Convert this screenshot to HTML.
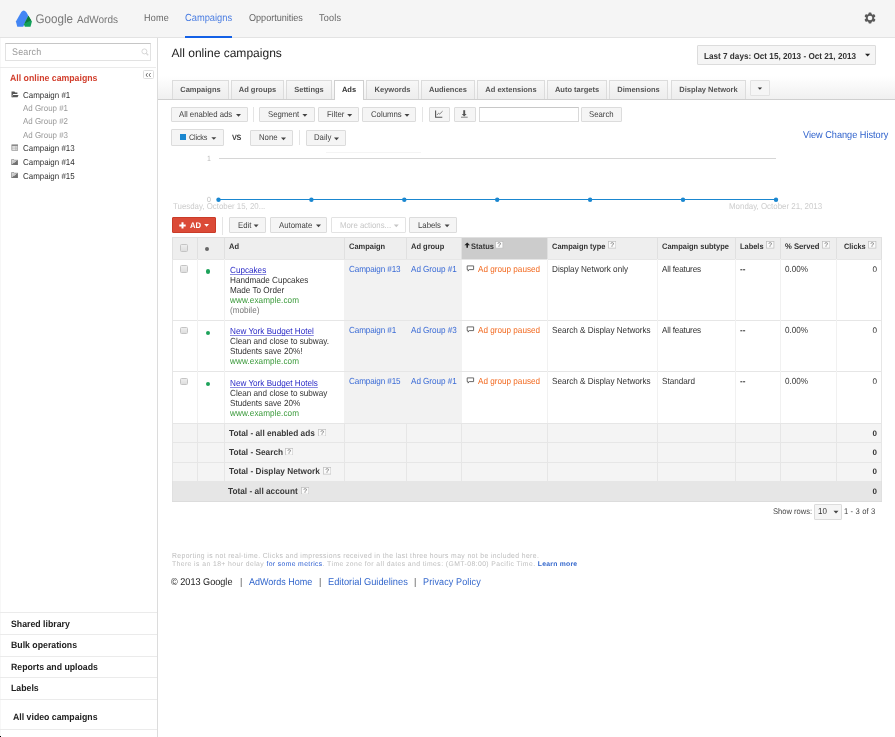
<!DOCTYPE html>
<html><head><meta charset="utf-8">
<style>
*{margin:0;padding:0;box-sizing:border-box}
html,body{width:895px;height:737px;overflow:hidden;background:#fff}
body{position:relative;font-family:"Liberation Sans",sans-serif;color:#333;text-rendering:geometricPrecision}
.a{position:absolute;white-space:nowrap}
</style></head><body><div id="w" style="position:absolute;left:0;top:0;width:895px;height:737px;background:#fff;will-change:transform;overflow:hidden">
<div class="a" style="left:0px;top:0px;width:895px;height:37px;background:#f5f5f5;"></div>
<div class="a" style="left:0px;top:37px;width:895px;height:1px;background:#e3e3e3;"></div>
<svg class="a" style="left:12px;top:8px" width="28" height="22" viewBox="0 0 28 22">
  <path d="M9.3 3.9 Q11.7 0.9 14.2 3.9 L16.4 7.8 L11.2 18.8 H5.3 L3.9 13.6 Z" fill="#4285f4"/>
  <path d="M16.4 7.8 L19.9 13.5 L18.5 18.8 H12.9 L11.9 16.4 Z" fill="#12a05a"/>
  <path d="M16.4 7.8 L19.1 12.3 L12.6 15.6 Z" fill="#0d7a3a"/>
</svg>
<svg class="a" style="left:35px;top:8px" width="90" height="22">
  <text x="0.5" y="15.2" font-family="Liberation Sans" font-size="12.6" fill="#777" textLength="37.5" lengthAdjust="spacingAndGlyphs">Google</text>
  <text x="42" y="15.2" font-family="Liberation Sans" font-size="10.6" fill="#777" textLength="41" lengthAdjust="spacingAndGlyphs">AdWords</text>
</svg>
<div class="a" style="left:144.10px;top:13px;font-size:9.933px;line-height:12px;color:#666;letter-spacing:0.275px;transform:scaleX(0.9091);transform-origin:0 0;">Home</div>
<div class="a" style="left:184.90px;top:13px;font-size:10.263px;line-height:12px;color:#4a7de2;transform:scaleX(0.9091);transform-origin:0 0;">Campaigns</div>
<div class="a" style="left:185px;top:36px;width:47px;height:2px;background:#1360e6;"></div>
<div class="a" style="left:248.60px;top:13px;font-size:9.988px;line-height:12px;color:#666;transform:scaleX(0.9091);transform-origin:0 0;">Opportunities</div>
<div class="a" style="left:319.40px;top:13px;font-size:10.010px;line-height:12px;color:#666;letter-spacing:0.220px;transform:scaleX(0.9091);transform-origin:0 0;">Tools</div>
<svg class="a" style="left:863px;top:11.4px" width="14" height="14" viewBox="-7 -7 14 14">
  <g fill="#5a5a5a"><circle r="4.2"/>
    <g id="tooth"><rect x="-1.5" y="-5.6" width="3" height="2.4" rx="0.8"/></g>
    <use href="#tooth" transform="rotate(60)"/><use href="#tooth" transform="rotate(120)"/>
    <use href="#tooth" transform="rotate(180)"/><use href="#tooth" transform="rotate(240)"/><use href="#tooth" transform="rotate(300)"/>
  </g><circle r="2.3" fill="#f5f5f5"/></svg>
<div class="a" style="left:157px;top:38px;width:1px;height:699px;background:#dcdcdc;"></div>
<div class="a" style="left:0px;top:38px;width:1px;height:699px;background:#f7f7f7;"></div>
<div class="a" style="left:5px;top:43px;width:146px;height:18px;border:1px solid #e2e2e2;border-top-color:#c6c6c6;background:#fff"></div>
<div class="a" style="left:12.30px;top:47px;font-size:9.644px;line-height:12px;color:#999;letter-spacing:0.216px;transform:scaleX(0.9259);transform-origin:0 0;">Search</div>
<svg class="a" style="left:141px;top:48px" width="9" height="9" viewBox="0 0 9 9"><circle cx="3.4" cy="3.4" r="2.5" fill="none" stroke="#d8d8d8" stroke-width="1"/><path d="M5.2 5.2 L7.2 7.2" stroke="#d8d8d8" stroke-width="1.3"/></svg>
<div class="a" style="left:0px;top:67px;width:156px;height:1px;background:#ebebeb;"></div>
<div class="a" style="left:143.4px;top:70.4px;width:10.2px;height:9px;border:1px solid #dedede;border-radius:1.5px;background:#fff"></div>
<svg class="a" style="left:145px;top:72px" width="8" height="6" viewBox="0 0 8 6"><path d="M2.6 1 L1 3 L2.6 5 M5.6 1 L4 3 L5.6 5" fill="none" stroke="#666" stroke-width="0.9"/></svg>
<div class="a" style="left:10.40px;top:72px;font-size:9.286px;line-height:12px;color:#d23f2d;font-weight:700;transform:scaleX(0.9434);transform-origin:0 0;">All online campaigns</div>
<div class="a" style="left:23.30px;top:89px;font-size:8.586px;line-height:12px;color:#333;transform:scaleX(0.9259);transform-origin:0 0;">Campaign #1</div>
<div class="a" style="left:23.30px;top:102px;font-size:8.586px;line-height:12px;color:#999;transform:scaleX(0.9259);transform-origin:0 0;">Ad Group #1</div>
<div class="a" style="left:23.30px;top:115px;font-size:8.586px;line-height:12px;color:#999;transform:scaleX(0.9259);transform-origin:0 0;">Ad Group #2</div>
<div class="a" style="left:23.30px;top:129px;font-size:8.586px;line-height:12px;color:#999;transform:scaleX(0.9259);transform-origin:0 0;">Ad Group #3</div>
<div class="a" style="left:23.30px;top:142px;font-size:8.586px;line-height:12px;color:#333;transform:scaleX(0.9259);transform-origin:0 0;">Campaign #13</div>
<div class="a" style="left:23.30px;top:156px;font-size:8.586px;line-height:12px;color:#333;transform:scaleX(0.9259);transform-origin:0 0;">Campaign #14</div>
<div class="a" style="left:23.30px;top:170px;font-size:8.586px;line-height:12px;color:#333;transform:scaleX(0.9259);transform-origin:0 0;">Campaign #15</div>
<svg class="a" style="left:10.5px;top:90.8px" width="8" height="7" viewBox="0 0 8 7"><path d="M0.5 0.5 H3.4 L4.3 1.6 H6.4 V3.1 H2.2 L1.5 4.2 V6.3 H0.5 Z" fill="#555"/><path d="M2 3.9 H7.5 L6.6 6.3 H1 Z" fill="#555"/></svg>
<svg class="a" style="left:10.5px;top:144px" width="7.5" height="7" viewBox="0 0 8 7.5"><rect x="0.9" y="0.9" width="6.4" height="5.8" fill="#eee" stroke="#8a8a8a" stroke-width="0.8"/><rect x="0.9" y="0.9" width="6.4" height="1.4" fill="#8a8a8a"/><path d="M0.9 4.4 H7.3 M5.2 2.4 V6.7" stroke="#999" stroke-width="0.6"/></svg>
<svg class="a" style="left:10.6px;top:158.5px" width="7.4" height="6.5" viewBox="0 0 8 7"><defs><linearGradient id="fg158" x1="0" y1="0" x2="1" y2="1"><stop offset="0" stop-color="#e4e4e4"/><stop offset="0.5" stop-color="#c4c4c4"/><stop offset="0.52" stop-color="#777"/><stop offset="1" stop-color="#666"/></linearGradient></defs><path d="M0.5 0.6 H3.2 L3.8 1.3 H7.5 V6.5 H0.5 Z" fill="url(#fg158)" stroke="#808080" stroke-width="0.7"/></svg>
<svg class="a" style="left:10.6px;top:171.6px" width="7.4" height="6.5" viewBox="0 0 8 7"><defs><linearGradient id="fg171" x1="0" y1="0" x2="1" y2="1"><stop offset="0" stop-color="#e4e4e4"/><stop offset="0.5" stop-color="#c4c4c4"/><stop offset="0.52" stop-color="#777"/><stop offset="1" stop-color="#666"/></linearGradient></defs><path d="M0.5 0.6 H3.2 L3.8 1.3 H7.5 V6.5 H0.5 Z" fill="url(#fg171)" stroke="#808080" stroke-width="0.7"/></svg>
<div class="a" style="left:0px;top:612.0px;width:157px;height:1.0px;background:#ebebeb;"></div>
<div class="a" style="left:0px;top:633.9px;width:157px;height:1.0px;background:#ebebeb;"></div>
<div class="a" style="left:0px;top:655.6px;width:157px;height:1.0px;background:#ebebeb;"></div>
<div class="a" style="left:0px;top:677.0px;width:157px;height:1.0px;background:#ebebeb;"></div>
<div class="a" style="left:0px;top:698.9px;width:157px;height:1.0px;background:#ebebeb;"></div>
<div class="a" style="left:0px;top:728.6px;width:157px;height:1.0px;background:#ebebeb;"></div>
<div class="a" style="left:10.60px;top:618px;font-size:9.275px;line-height:12px;color:#222;font-weight:700;transform:scaleX(0.9434);transform-origin:0 0;">Shared library</div>
<div class="a" style="left:10.80px;top:639px;font-size:9.275px;line-height:12px;color:#222;font-weight:700;transform:scaleX(0.9434);transform-origin:0 0;">Bulk operations</div>
<div class="a" style="left:10.80px;top:661px;font-size:9.275px;line-height:12px;color:#222;font-weight:700;transform:scaleX(0.9434);transform-origin:0 0;">Reports and uploads</div>
<div class="a" style="left:10.80px;top:682px;font-size:9.275px;line-height:12px;color:#222;font-weight:700;transform:scaleX(0.9434);transform-origin:0 0;">Labels</div>
<div class="a" style="left:13.00px;top:711px;font-size:9.275px;line-height:12px;color:#222;font-weight:700;transform:scaleX(0.9434);transform-origin:0 0;">All video campaigns</div>
<div class="a" style="left:171.50px;top:47px;font-size:12.040px;line-height:12px;color:#222;">All online campaigns</div>
<div class="a" style="left:697px;top:45px;width:179px;height:19.6px;background:#f5f5f5;border:1px solid #dcdcdc;border-radius:1px;"></div>
<div class="a" style="left:703.50px;top:50px;font-size:8.671px;line-height:12px;color:#333;font-weight:700;transform:scaleX(0.9434);transform-origin:0 0;">Last 7 days: Oct 15, 2013 - Oct 21, 2013</div>
<svg class="a" style="left:865px;top:53px" width="8" height="5"><path d="M0.00 0.80 H5.20 L2.60 3.40 Z" fill="#222"/></svg>
<div class="a" style="left:158px;top:76px;width:737px;height:23px;background:;background:linear-gradient(#fff,#f0f0f0)"></div>
<div class="a" style="left:158px;top:98.6px;width:737px;height:1.0px;background:#cfcfcf;"></div>
<div class="a" style="left:172px;top:79.9px;width:57.00px;height:18.70px;background:linear-gradient(#f7f7f7,#ededed);border:1px solid #dcdcdc;border-bottom:none;font-size:7.5px;font-weight:bold;color:#444;text-align:center;line-height:18.70px"></div>
<div class="a" style="left:172px;top:84.40px;width:57.00px;text-align:center;font-size:7.5px;line-height:12px;font-weight:bold;color:#555">Campaigns</div>
<div class="a" style="left:231px;top:79.9px;width:53.00px;height:18.70px;background:linear-gradient(#f7f7f7,#ededed);border:1px solid #dcdcdc;border-bottom:none;font-size:7.5px;font-weight:bold;color:#444;text-align:center;line-height:18.70px"></div>
<div class="a" style="left:231px;top:84.40px;width:53.00px;text-align:center;font-size:7.5px;line-height:12px;font-weight:bold;color:#555">Ad groups</div>
<div class="a" style="left:286px;top:79.9px;width:46.00px;height:18.70px;background:linear-gradient(#f7f7f7,#ededed);border:1px solid #dcdcdc;border-bottom:none;font-size:7.5px;font-weight:bold;color:#444;text-align:center;line-height:18.70px"></div>
<div class="a" style="left:286px;top:84.40px;width:46.00px;text-align:center;font-size:7.5px;line-height:12px;font-weight:bold;color:#555">Settings</div>
<div class="a" style="left:334px;top:79.9px;width:30.00px;height:19.70px;background:#fff;border:1px solid #cfcfcf;border-bottom:none;font-size:7.5px;font-weight:bold;color:#222;text-align:center;line-height:19.70px"></div>
<div class="a" style="left:334px;top:84.40px;width:30.00px;text-align:center;font-size:7.5px;line-height:12px;font-weight:bold;color:#333">Ads</div>
<div class="a" style="left:366px;top:79.9px;width:53.00px;height:18.70px;background:linear-gradient(#f7f7f7,#ededed);border:1px solid #dcdcdc;border-bottom:none;font-size:7.5px;font-weight:bold;color:#444;text-align:center;line-height:18.70px"></div>
<div class="a" style="left:366px;top:84.40px;width:53.00px;text-align:center;font-size:7.5px;line-height:12px;font-weight:bold;color:#555">Keywords</div>
<div class="a" style="left:421px;top:79.9px;width:54.00px;height:18.70px;background:linear-gradient(#f7f7f7,#ededed);border:1px solid #dcdcdc;border-bottom:none;font-size:7.5px;font-weight:bold;color:#444;text-align:center;line-height:18.70px"></div>
<div class="a" style="left:421px;top:84.40px;width:54.00px;text-align:center;font-size:7.5px;line-height:12px;font-weight:bold;color:#555">Audiences</div>
<div class="a" style="left:477px;top:79.9px;width:68.00px;height:18.70px;background:linear-gradient(#f7f7f7,#ededed);border:1px solid #dcdcdc;border-bottom:none;font-size:7.5px;font-weight:bold;color:#444;text-align:center;line-height:18.70px"></div>
<div class="a" style="left:477px;top:84.40px;width:68.00px;text-align:center;font-size:7.5px;line-height:12px;font-weight:bold;color:#555">Ad extensions</div>
<div class="a" style="left:547px;top:79.9px;width:60.00px;height:18.70px;background:linear-gradient(#f7f7f7,#ededed);border:1px solid #dcdcdc;border-bottom:none;font-size:7.5px;font-weight:bold;color:#444;text-align:center;line-height:18.70px"></div>
<div class="a" style="left:547px;top:84.40px;width:60.00px;text-align:center;font-size:7.5px;line-height:12px;font-weight:bold;color:#555">Auto targets</div>
<div class="a" style="left:609px;top:79.9px;width:59.00px;height:18.70px;background:linear-gradient(#f7f7f7,#ededed);border:1px solid #dcdcdc;border-bottom:none;font-size:7.5px;font-weight:bold;color:#444;text-align:center;line-height:18.70px"></div>
<div class="a" style="left:609px;top:84.40px;width:59.00px;text-align:center;font-size:7.5px;line-height:12px;font-weight:bold;color:#555">Dimensions</div>
<div class="a" style="left:671px;top:79.9px;width:75.00px;height:18.70px;background:linear-gradient(#f7f7f7,#ededed);border:1px solid #dcdcdc;border-bottom:none;font-size:7.5px;font-weight:bold;color:#444;text-align:center;line-height:18.70px"></div>
<div class="a" style="left:671px;top:84.40px;width:75.00px;text-align:center;font-size:7.5px;line-height:12px;font-weight:bold;color:#555">Display Network</div>
<div class="a" style="left:749.6px;top:80px;width:20.0px;height:15.6px;background:#f5f5f5;border:1px solid #e2e2e2;border-radius:1px;"></div>
<svg class="a" style="left:757px;top:87px" width="7" height="5"><path d="M0.70 0.60 H5.10 L2.90 2.80 Z" fill="#333"/></svg>
<div class="a" style="left:171px;top:107px;width:77px;height:14.5px;background:#f5f5f5;border:1px solid #dcdcdc;border-radius:1px;"></div>
<div class="a" style="left:179.10px;top:108px;font-size:8.424px;line-height:12px;color:#444;transform:scaleX(0.9259);transform-origin:0 0;">All enabled ads</div>
<svg class="a" style="left:236px;top:114px" width="8" height="5"><path d="M0.00 0.05 H5.00 L2.50 2.65 Z" fill="#444"/></svg>
<div class="a" style="left:253px;top:107px;width:1px;height:15px;background:#e5e5e5;"></div>
<div class="a" style="left:259px;top:107px;width:56px;height:14.5px;background:#f5f5f5;border:1px solid #dcdcdc;border-radius:1px;"></div>
<div class="a" style="left:268.00px;top:108px;font-size:8.424px;line-height:12px;color:#444;transform:scaleX(0.9259);transform-origin:0 0;">Segment</div>
<svg class="a" style="left:302px;top:114px" width="8" height="5"><path d="M0.40 0.05 H5.40 L2.90 2.65 Z" fill="#444"/></svg>
<div class="a" style="left:318px;top:107px;width:41px;height:14.5px;background:#f5f5f5;border:1px solid #dcdcdc;border-radius:1px;"></div>
<div class="a" style="left:326.50px;top:108px;font-size:8.424px;line-height:12px;color:#444;transform:scaleX(0.9259);transform-origin:0 0;">Filter</div>
<svg class="a" style="left:347px;top:114px" width="8" height="5"><path d="M0.20 0.05 H5.20 L2.70 2.65 Z" fill="#444"/></svg>
<div class="a" style="left:362px;top:107px;width:54px;height:14.5px;background:#f5f5f5;border:1px solid #dcdcdc;border-radius:1px;"></div>
<div class="a" style="left:370.50px;top:108px;font-size:8.424px;line-height:12px;color:#444;transform:scaleX(0.9259);transform-origin:0 0;">Columns</div>
<svg class="a" style="left:404px;top:114px" width="8" height="5"><path d="M0.50 0.05 H5.50 L3.00 2.65 Z" fill="#444"/></svg>
<div class="a" style="left:422px;top:107px;width:1px;height:15px;background:#e5e5e5;"></div>
<div class="a" style="left:429px;top:107px;width:21px;height:14.5px;background:#f5f5f5;border:1px solid #dcdcdc;border-radius:1px;"></div>
<svg class="a" style="left:434px;top:109px" width="11" height="10" viewBox="0 0 11 10"><path d="M1.6 1.4 V8.3 H8.3" fill="none" stroke="#555" stroke-width="1.1"/><path d="M2.9 6 L4.6 4.2 L5.7 5 L8.6 2.2" fill="none" stroke="#666" stroke-width="0.8"/></svg>
<div class="a" style="left:454px;top:107px;width:22px;height:14.5px;background:#f5f5f5;border:1px solid #dcdcdc;border-radius:1px;"></div>
<svg class="a" style="left:459px;top:109px" width="11" height="10" viewBox="0 0 11 10"><path d="M5.2 1.2 V5.5" stroke="#555" stroke-width="1.9"/><path d="M2.8 5 L5.2 7.6 L7.6 5 Z" fill="#555"/><path d="M2 8.2 H8.7" stroke="#777" stroke-width="0.9"/></svg>
<div class="a" style="left:479.3px;top:106.8px;width:99.4px;height:15.5px;border:1px solid #d9d9d9;border-top-color:#c8c8c8;background:#fff"></div>
<div class="a" style="left:581px;top:107px;width:41px;height:15px;background:#f5f5f5;border:1px solid #dcdcdc;border-radius:1px;"></div>
<div class="a" style="left:589.40px;top:108px;font-size:8.424px;line-height:12px;color:#444;transform:scaleX(0.9259);transform-origin:0 0;">Search</div>
<div class="a" style="left:171px;top:129px;width:53px;height:16.5px;background:#f5f5f5;border:1px solid #dcdcdc;border-radius:1px;"></div>
<div class="a" style="left:179.7px;top:133.8px;width:6.4px;height:6.0px;background:#1a87d0;"></div>
<div class="a" style="left:188.80px;top:132px;font-size:7.938px;line-height:12px;color:#444;letter-spacing:-0.238px;transform:scaleX(0.9259);transform-origin:0 0;">Clicks</div>
<svg class="a" style="left:211px;top:137px" width="8" height="5"><path d="M0.30 0.20 H5.30 L2.80 2.80 Z" fill="#444"/></svg>
<div class="a" style="left:232.40px;top:132px;font-size:7.738px;line-height:12px;color:#444;font-weight:700;letter-spacing:-0.318px;transform:scaleX(0.9434);transform-origin:0 0;">VS</div>
<div class="a" style="left:250px;top:130px;width:43px;height:15.5px;background:#f5f5f5;border:1px solid #dcdcdc;border-radius:1px;"></div>
<div class="a" style="left:258.50px;top:131px;font-size:8.424px;line-height:12px;color:#444;transform:scaleX(0.9259);transform-origin:0 0;">None</div>
<svg class="a" style="left:281px;top:137px" width="8" height="5"><path d="M0.00 0.55 H5.00 L2.50 3.15 Z" fill="#444"/></svg>
<div class="a" style="left:299px;top:130px;width:1px;height:15.3px;background:#e5e5e5;"></div>
<div class="a" style="left:306px;top:130px;width:40px;height:15.5px;background:#f5f5f5;border:1px solid #dcdcdc;border-radius:1px;"></div>
<div class="a" style="left:314.20px;top:131px;font-size:8.424px;line-height:12px;color:#444;transform:scaleX(0.9259);transform-origin:0 0;">Daily</div>
<svg class="a" style="left:334px;top:137px" width="8" height="5"><path d="M0.00 0.55 H5.00 L2.50 3.15 Z" fill="#444"/></svg>
<div class="a" style="left:802.80px;top:130px;font-size:9.904px;line-height:12px;color:#2f62cc;transform:scaleX(0.9259);transform-origin:0 0;">View Change History</div>
<div class="a" style="left:326px;top:151.5px;width:95px;height:1.0px;background:#f4f4f4;"></div>
<div class="a" style="left:207.20px;top:153px;font-size:7.560px;line-height:12px;color:#bbb;transform:scaleX(0.9259);transform-origin:0 0;">1</div>
<div class="a" style="left:218.5px;top:158px;width:557.5px;height:1px;background:#d6d6d6;"></div>
<div class="a" style="left:207.20px;top:194px;font-size:7.560px;line-height:12px;color:#bbb;transform:scaleX(0.9259);transform-origin:0 0;">0</div>
<div class="a" style="left:218.5px;top:198.6px;width:557.5px;height:1.3px;background:#1a87d0;"></div>
<svg class="a" style="left:214px;top:194.5px" width="566" height="10"><g fill="#1a87d0"><circle cx="4.5" cy="4.8" r="2.2"/><circle cx="97.4" cy="4.8" r="2.2"/><circle cx="190.3" cy="4.8" r="2.2"/><circle cx="283.2" cy="4.8" r="2.2"/><circle cx="376.1" cy="4.8" r="2.2"/><circle cx="469.0" cy="4.8" r="2.2"/><circle cx="562.0" cy="4.8" r="2.2"/></g></svg>
<div class="a" style="left:172.60px;top:200px;font-size:8.510px;line-height:12px;color:#ccc;transform:scaleX(0.9259);transform-origin:0 0;">Tuesday, October 15, 20...</div>
<div class="a" style="left:729.00px;top:200px;font-size:8.564px;line-height:12px;color:#ccc;transform:scaleX(0.9259);transform-origin:0 0;">Monday, October 21, 2013</div>
<div class="a" style="left:172px;top:217px;width:44px;height:15.5px;background:#db4a37;border:1px solid #c93b28;border-radius:1px"></div>
<svg class="a" style="left:179px;top:222px" width="7" height="7" viewBox="0 0 7 7"><path d="M3.5 0.2 V6.6 M0.3 3.4 H6.7" stroke="#fff" stroke-width="2"/></svg>
<div class="a" style="left:190.10px;top:220px;font-size:8.162px;line-height:12px;color:#fff;font-weight:700;transform:scaleX(0.9434);transform-origin:0 0;">AD</div>
<svg class="a" style="left:204px;top:223px" width="7" height="5"><path d="M0.20 0.90 H5.00 L2.60 3.70 Z" fill="#fff"/></svg>
<div class="a" style="left:222px;top:217px;width:1px;height:18px;background:#e5e5e5;"></div>
<div class="a" style="left:229px;top:217px;width:37px;height:15.5px;background:#f5f5f5;border:1px solid #dcdcdc;border-radius:1px;"></div>
<div class="a" style="left:237.50px;top:219px;font-size:8.424px;line-height:12px;color:#444;transform:scaleX(0.9259);transform-origin:0 0;">Edit</div>
<svg class="a" style="left:253px;top:224px" width="8" height="5"><path d="M0.60 0.55 H5.60 L3.10 3.15 Z" fill="#444"/></svg>
<div class="a" style="left:270px;top:217px;width:57px;height:15.5px;background:#f5f5f5;border:1px solid #dcdcdc;border-radius:1px;"></div>
<div class="a" style="left:278.50px;top:219px;font-size:8.424px;line-height:12px;color:#444;transform:scaleX(0.9259);transform-origin:0 0;">Automate</div>
<svg class="a" style="left:316px;top:224px" width="8" height="5"><path d="M0.00 0.55 H5.00 L2.50 3.15 Z" fill="#444"/></svg>
<div class="a" style="left:331px;top:217px;width:75px;height:15.5px;background:#fff;border:1px solid #e3e3e3;border-radius:1px;"></div>
<div class="a" style="left:339.50px;top:219px;font-size:8.424px;line-height:12px;color:#c6c6c6;transform:scaleX(0.9259);transform-origin:0 0;">More actions...</div>
<svg class="a" style="left:393px;top:224px" width="8" height="5"><path d="M0.80 0.55 H5.80 L3.30 3.15 Z" fill="#c6c6c6"/></svg>
<div class="a" style="left:409px;top:217px;width:48px;height:15.5px;background:#f5f5f5;border:1px solid #dcdcdc;border-radius:1px;"></div>
<div class="a" style="left:417.50px;top:219px;font-size:8.424px;line-height:12px;color:#444;transform:scaleX(0.9259);transform-origin:0 0;">Labels</div>
<svg class="a" style="left:444px;top:224px" width="8" height="5"><path d="M0.60 0.55 H5.60 L3.10 3.15 Z" fill="#444"/></svg>
<div class="a" style="left:172px;top:237.2px;width:709.5px;height:22.1px;background:#eeeeee;"></div>
<div class="a" style="left:461px;top:237.2px;width:86px;height:22.1px;background:#cccccc;"></div>
<div class="a" style="left:344.2px;top:259.3px;width:117.4px;height:163.7px;background:#f2f2f2;"></div>
<div class="a" style="left:172px;top:423px;width:709.5px;height:58px;background:#f4f4f4;"></div>
<div class="a" style="left:172px;top:481px;width:709.5px;height:19.5px;background:#e6e6e6;"></div>
<div class="a" style="left:172px;top:500.5px;width:709.5px;height:0.8px;background:#dcdcdc;"></div>
<div class="a" style="left:172px;top:236.7px;width:709.5px;height:1.0px;background:#e0e0e0;"></div>
<div class="a" style="left:172px;top:258.8px;width:709.5px;height:1.0px;background:#e6e6e6;"></div>
<div class="a" style="left:172px;top:320.0px;width:709.5px;height:1.0px;background:#e6e6e6;"></div>
<div class="a" style="left:172px;top:371.1px;width:709.5px;height:1.0px;background:#e6e6e6;"></div>
<div class="a" style="left:172px;top:422.5px;width:709.5px;height:1.0px;background:#e6e6e6;"></div>
<div class="a" style="left:172px;top:442.0px;width:709.5px;height:1.0px;background:#e6e6e6;"></div>
<div class="a" style="left:172px;top:461.9px;width:709.5px;height:1.0px;background:#e6e6e6;"></div>
<div class="a" style="left:172px;top:480.5px;width:709.5px;height:1.0px;background:#e6e6e6;"></div>
<div class="a" style="left:172.0px;top:237.2px;width:1.0px;height:22.1px;background:#e0e0e0;"></div>
<div class="a" style="left:197.0px;top:237.2px;width:1.0px;height:22.1px;background:#e0e0e0;"></div>
<div class="a" style="left:224.0px;top:237.2px;width:1.0px;height:22.1px;background:#e0e0e0;"></div>
<div class="a" style="left:344.0px;top:237.2px;width:1.0px;height:22.1px;background:#e0e0e0;"></div>
<div class="a" style="left:406.0px;top:237.2px;width:1.0px;height:22.1px;background:#e0e0e0;"></div>
<div class="a" style="left:460.7px;top:237.2px;width:1.0px;height:22.1px;background:#e0e0e0;"></div>
<div class="a" style="left:546.5px;top:237.2px;width:1.0px;height:22.1px;background:#e0e0e0;"></div>
<div class="a" style="left:657.0px;top:237.2px;width:1.0px;height:22.1px;background:#e0e0e0;"></div>
<div class="a" style="left:735.0px;top:237.2px;width:1.0px;height:22.1px;background:#e0e0e0;"></div>
<div class="a" style="left:780.0px;top:237.2px;width:1.0px;height:22.1px;background:#e0e0e0;"></div>
<div class="a" style="left:836.0px;top:237.2px;width:1.0px;height:22.1px;background:#e0e0e0;"></div>
<div class="a" style="left:881.0px;top:237.2px;width:1.0px;height:22.1px;background:#e0e0e0;"></div>
<div class="a" style="left:197.0px;top:259.3px;width:1.0px;height:163.7px;background:#f1f1f1;"></div>
<div class="a" style="left:224.0px;top:259.3px;width:1.0px;height:163.7px;background:#f1f1f1;"></div>
<div class="a" style="left:546.5px;top:259.3px;width:1.0px;height:163.7px;background:#f1f1f1;"></div>
<div class="a" style="left:657.0px;top:259.3px;width:1.0px;height:163.7px;background:#f1f1f1;"></div>
<div class="a" style="left:735.0px;top:259.3px;width:1.0px;height:163.7px;background:#f1f1f1;"></div>
<div class="a" style="left:780.0px;top:259.3px;width:1.0px;height:163.7px;background:#f1f1f1;"></div>
<div class="a" style="left:836.0px;top:259.3px;width:1.0px;height:163.7px;background:#f1f1f1;"></div>
<div class="a" style="left:172.0px;top:259.3px;width:1.0px;height:163.7px;background:#e6e6e6;"></div>
<div class="a" style="left:881.0px;top:259.3px;width:1.0px;height:163.7px;background:#e6e6e6;"></div>
<div class="a" style="left:172.0px;top:423px;width:1.0px;height:58px;background:#e6e6e6;"></div>
<div class="a" style="left:197.0px;top:423px;width:1.0px;height:58px;background:#e6e6e6;"></div>
<div class="a" style="left:224.0px;top:423px;width:1.0px;height:58px;background:#e6e6e6;"></div>
<div class="a" style="left:344.0px;top:423px;width:1.0px;height:58px;background:#e6e6e6;"></div>
<div class="a" style="left:406.0px;top:423px;width:1.0px;height:58px;background:#e6e6e6;"></div>
<div class="a" style="left:460.7px;top:423px;width:1.0px;height:58px;background:#e6e6e6;"></div>
<div class="a" style="left:546.5px;top:423px;width:1.0px;height:58px;background:#e6e6e6;"></div>
<div class="a" style="left:657.0px;top:423px;width:1.0px;height:58px;background:#e6e6e6;"></div>
<div class="a" style="left:735.0px;top:423px;width:1.0px;height:58px;background:#e6e6e6;"></div>
<div class="a" style="left:780.0px;top:423px;width:1.0px;height:58px;background:#e6e6e6;"></div>
<div class="a" style="left:836.0px;top:423px;width:1.0px;height:58px;background:#e6e6e6;"></div>
<div class="a" style="left:881.0px;top:423px;width:1.0px;height:58px;background:#e6e6e6;"></div>
<div class="a" style="left:172px;top:481px;width:1px;height:19.5px;background:#e0e0e0;"></div>
<div class="a" style="left:881.0px;top:481px;width:1.0px;height:19.5px;background:#e0e0e0;"></div>
<div class="a" style="left:180.1px;top:244px;width:7.8px;height:7.8px;border:1px solid #c4c4c4;border-radius:1.5px;background:linear-gradient(#eeeeee,#dedede)"></div>
<div class="a" style="left:205.2px;top:246.9px;width:4px;height:4px;border-radius:50%;background:#666"></div>
<div class="a" style="left:229.00px;top:241px;font-size:7.950px;line-height:12px;color:#333;font-weight:700;transform:scaleX(0.9434);transform-origin:0 0;">Ad</div>
<div class="a" style="left:348.60px;top:241px;font-size:7.950px;line-height:12px;color:#333;font-weight:700;transform:scaleX(0.9434);transform-origin:0 0;">Campaign</div>
<div class="a" style="left:410.50px;top:241px;font-size:7.950px;line-height:12px;color:#333;font-weight:700;transform:scaleX(0.9434);transform-origin:0 0;">Ad group</div>
<svg class="a" style="left:463.5px;top:242px" width="7" height="7" viewBox="0 0 7 7"><path d="M3.2 0.5 L6 3.3 H4 V5.8 H2.4 V3.3 H0.4 Z" fill="#222"/></svg>
<div class="a" style="left:471.00px;top:241px;font-size:7.950px;line-height:12px;color:#333;font-weight:700;transform:scaleX(0.9434);transform-origin:0 0;">Status</div>
<svg class="a" style="left:495.20px;top:241.00px" width="8.5" height="7.5" viewBox="0 0 8.5 7.5"><rect x="0.5" y="0.5" width="7.4" height="6.6" fill="#fbfbfb" stroke="#bdbdbd" stroke-width="0.7"/><text x="4.2" y="6" font-family="Liberation Sans" font-size="6.6" text-anchor="middle" fill="#555">?</text></svg>
<div class="a" style="left:551.60px;top:241px;font-size:7.908px;line-height:12px;color:#333;font-weight:700;transform:scaleX(0.9434);transform-origin:0 0;">Campaign type</div>
<svg class="a" style="left:607.50px;top:241.00px" width="8.5" height="7.5" viewBox="0 0 8.5 7.5"><rect x="0.5" y="0.5" width="7.4" height="6.6" fill="#fbfbfb" stroke="#bdbdbd" stroke-width="0.7"/><text x="4.2" y="6" font-family="Liberation Sans" font-size="6.6" text-anchor="middle" fill="#555">?</text></svg>
<div class="a" style="left:661.70px;top:241px;font-size:7.950px;line-height:12px;color:#333;font-weight:700;transform:scaleX(0.9434);transform-origin:0 0;">Campaign subtype</div>
<div class="a" style="left:740.10px;top:241px;font-size:7.897px;line-height:12px;color:#333;font-weight:700;transform:scaleX(0.9434);transform-origin:0 0;">Labels</div>
<svg class="a" style="left:766.30px;top:241.00px" width="8.5" height="7.5" viewBox="0 0 8.5 7.5"><rect x="0.5" y="0.5" width="7.4" height="6.6" fill="#fbfbfb" stroke="#bdbdbd" stroke-width="0.7"/><text x="4.2" y="6" font-family="Liberation Sans" font-size="6.6" text-anchor="middle" fill="#555">?</text></svg>
<div class="a" style="left:784.80px;top:241px;font-size:8.141px;line-height:12px;color:#333;font-weight:700;transform:scaleX(0.9434);transform-origin:0 0;">% Served</div>
<svg class="a" style="left:821.60px;top:241.00px" width="8.5" height="7.5" viewBox="0 0 8.5 7.5"><rect x="0.5" y="0.5" width="7.4" height="6.6" fill="#fbfbfb" stroke="#bdbdbd" stroke-width="0.7"/><text x="4.2" y="6" font-family="Liberation Sans" font-size="6.6" text-anchor="middle" fill="#555">?</text></svg>
<div class="a" style="left:843.80px;top:241px;font-size:7.802px;line-height:12px;color:#333;font-weight:700;transform:scaleX(0.9434);transform-origin:0 0;">Clicks</div>
<svg class="a" style="left:868.00px;top:241.00px" width="8.5" height="7.5" viewBox="0 0 8.5 7.5"><rect x="0.5" y="0.5" width="7.4" height="6.6" fill="#fbfbfb" stroke="#bdbdbd" stroke-width="0.7"/><text x="4.2" y="6" font-family="Liberation Sans" font-size="6.6" text-anchor="middle" fill="#555">?</text></svg>
<div class="a" style="left:180.1px;top:265.3px;width:7.8px;height:7.8px;border:1px solid #c4c4c4;border-radius:1.5px;background:linear-gradient(#eeeeee,#dedede)"></div>
<div class="a" style="left:205.7px;top:269.30px;width:4.6px;height:4.6px;border-radius:50%;background:#1da25a"></div>
<div class="a" style="left:230.00px;top:264px;font-size:8.802px;line-height:12px;color:#2b2bc7;transform:scaleX(0.9259);transform-origin:0 0;text-decoration:underline;text-decoration-color:#8c8ce0;text-decoration-skip-ink:none;">Cupcakes</div>
<div class="a" style="left:230.00px;top:274px;font-size:8.802px;line-height:12px;color:#333;transform:scaleX(0.9259);transform-origin:0 0;">Handmade Cupcakes</div>
<div class="a" style="left:230.00px;top:284px;font-size:8.802px;line-height:12px;color:#333;transform:scaleX(0.9259);transform-origin:0 0;">Made To Order</div>
<div class="a" style="left:230.00px;top:294px;font-size:8.802px;line-height:12px;color:#3a9a3a;letter-spacing:0.086px;transform:scaleX(0.9259);transform-origin:0 0;">www.example.com</div>
<div class="a" style="left:230.00px;top:304px;font-size:8.802px;line-height:12px;color:#777;transform:scaleX(0.9259);transform-origin:0 0;">(mobile)</div>
<div class="a" style="left:348.60px;top:263px;font-size:8.802px;line-height:12px;color:#3a6bd6;letter-spacing:-0.130px;transform:scaleX(0.9259);transform-origin:0 0;">Campaign #13</div>
<div class="a" style="left:410.50px;top:263px;font-size:8.802px;line-height:12px;color:#3a6bd6;letter-spacing:-0.054px;transform:scaleX(0.9259);transform-origin:0 0;">Ad Group #1</div>
<svg class="a" style="left:466px;top:264.85px" width="9" height="8" viewBox="0 0 9 8"><path d="M1.2 0.9 H7.6 V4.6 H3.2 L2.1 6.1 V4.6 H1.2 Z" fill="#fff" stroke="#5a5a5a" stroke-width="0.9" stroke-linejoin="round"/></svg>
<div class="a" style="left:478.20px;top:263px;font-size:8.802px;line-height:12px;color:#f2691f;transform:scaleX(0.9259);transform-origin:0 0;">Ad group paused</div>
<div class="a" style="left:551.60px;top:263px;font-size:8.802px;line-height:12px;color:#333;transform:scaleX(0.9259);transform-origin:0 0;">Display Network only</div>
<div class="a" style="left:661.70px;top:263px;font-size:8.802px;line-height:12px;color:#333;letter-spacing:-0.162px;transform:scaleX(0.9259);transform-origin:0 0;">All features</div>
<div class="a" style="left:740.30px;top:263px;font-size:8.639px;line-height:12px;color:#333;font-weight:700;transform:scaleX(0.9434);transform-origin:0 0;">--</div>
<div class="a" style="left:784.80px;top:263px;font-size:8.802px;line-height:12px;color:#333;transform:scaleX(0.9259);transform-origin:0 0;">0.00%</div>
<div class="a" style="left:800px;top:263.72px;width:77px;text-align:right;font-size:8.15px;line-height:12px;color:#333">0</div>
<div class="a" style="left:180.1px;top:326.5px;width:7.8px;height:7.8px;border:1px solid #c4c4c4;border-radius:1.5px;background:linear-gradient(#eeeeee,#dedede)"></div>
<div class="a" style="left:205.7px;top:330.50px;width:4.6px;height:4.6px;border-radius:50%;background:#1da25a"></div>
<div class="a" style="left:230.00px;top:325px;font-size:8.802px;line-height:12px;color:#2b2bc7;transform:scaleX(0.9259);transform-origin:0 0;text-decoration:underline;text-decoration-color:#8c8ce0;text-decoration-skip-ink:none;">New York Budget Hotel</div>
<div class="a" style="left:230.00px;top:335px;font-size:8.802px;line-height:12px;color:#333;transform:scaleX(0.9259);transform-origin:0 0;">Clean and close to subway.</div>
<div class="a" style="left:230.00px;top:345px;font-size:8.802px;line-height:12px;color:#333;transform:scaleX(0.9259);transform-origin:0 0;">Students save 20%!</div>
<div class="a" style="left:230.00px;top:355px;font-size:8.802px;line-height:12px;color:#3a9a3a;letter-spacing:0.086px;transform:scaleX(0.9259);transform-origin:0 0;">www.example.com</div>
<div class="a" style="left:348.60px;top:324px;font-size:8.802px;line-height:12px;color:#3a6bd6;letter-spacing:-0.130px;transform:scaleX(0.9259);transform-origin:0 0;">Campaign #1</div>
<div class="a" style="left:410.50px;top:324px;font-size:8.802px;line-height:12px;color:#3a6bd6;letter-spacing:-0.054px;transform:scaleX(0.9259);transform-origin:0 0;">Ad Group #3</div>
<svg class="a" style="left:466px;top:325.85px" width="9" height="8" viewBox="0 0 9 8"><path d="M1.2 0.9 H7.6 V4.6 H3.2 L2.1 6.1 V4.6 H1.2 Z" fill="#fff" stroke="#5a5a5a" stroke-width="0.9" stroke-linejoin="round"/></svg>
<div class="a" style="left:478.20px;top:324px;font-size:8.802px;line-height:12px;color:#f2691f;transform:scaleX(0.9259);transform-origin:0 0;">Ad group paused</div>
<div class="a" style="left:551.60px;top:324px;font-size:8.802px;line-height:12px;color:#333;transform:scaleX(0.9259);transform-origin:0 0;">Search &amp; Display Networks</div>
<div class="a" style="left:661.70px;top:324px;font-size:8.802px;line-height:12px;color:#333;letter-spacing:-0.162px;transform:scaleX(0.9259);transform-origin:0 0;">All features</div>
<div class="a" style="left:740.30px;top:324px;font-size:8.639px;line-height:12px;color:#333;font-weight:700;transform:scaleX(0.9434);transform-origin:0 0;">--</div>
<div class="a" style="left:784.80px;top:324px;font-size:8.802px;line-height:12px;color:#333;transform:scaleX(0.9259);transform-origin:0 0;">0.00%</div>
<div class="a" style="left:800px;top:324.72px;width:77px;text-align:right;font-size:8.15px;line-height:12px;color:#333">0</div>
<div class="a" style="left:180.1px;top:377.6px;width:7.8px;height:7.8px;border:1px solid #c4c4c4;border-radius:1.5px;background:linear-gradient(#eeeeee,#dedede)"></div>
<div class="a" style="left:205.7px;top:381.60px;width:4.6px;height:4.6px;border-radius:50%;background:#1da25a"></div>
<div class="a" style="left:230.00px;top:377px;font-size:8.802px;line-height:12px;color:#2b2bc7;transform:scaleX(0.9259);transform-origin:0 0;text-decoration:underline;text-decoration-color:#8c8ce0;text-decoration-skip-ink:none;">New York Budget Hotels</div>
<div class="a" style="left:230.00px;top:387px;font-size:8.802px;line-height:12px;color:#333;transform:scaleX(0.9259);transform-origin:0 0;">Clean and close to subway</div>
<div class="a" style="left:230.00px;top:397px;font-size:8.802px;line-height:12px;color:#333;transform:scaleX(0.9259);transform-origin:0 0;">Students save 20%</div>
<div class="a" style="left:230.00px;top:407px;font-size:8.802px;line-height:12px;color:#3a9a3a;letter-spacing:0.086px;transform:scaleX(0.9259);transform-origin:0 0;">www.example.com</div>
<div class="a" style="left:348.60px;top:375px;font-size:8.802px;line-height:12px;color:#3a6bd6;letter-spacing:-0.130px;transform:scaleX(0.9259);transform-origin:0 0;">Campaign #15</div>
<div class="a" style="left:410.50px;top:375px;font-size:8.802px;line-height:12px;color:#3a6bd6;letter-spacing:-0.054px;transform:scaleX(0.9259);transform-origin:0 0;">Ad Group #1</div>
<svg class="a" style="left:466px;top:376.95px" width="9" height="8" viewBox="0 0 9 8"><path d="M1.2 0.9 H7.6 V4.6 H3.2 L2.1 6.1 V4.6 H1.2 Z" fill="#fff" stroke="#5a5a5a" stroke-width="0.9" stroke-linejoin="round"/></svg>
<div class="a" style="left:478.20px;top:375px;font-size:8.802px;line-height:12px;color:#f2691f;transform:scaleX(0.9259);transform-origin:0 0;">Ad group paused</div>
<div class="a" style="left:551.60px;top:375px;font-size:8.802px;line-height:12px;color:#333;transform:scaleX(0.9259);transform-origin:0 0;">Search &amp; Display Networks</div>
<div class="a" style="left:661.70px;top:375px;font-size:8.802px;line-height:12px;color:#333;letter-spacing:0.000px;transform:scaleX(0.9259);transform-origin:0 0;">Standard</div>
<div class="a" style="left:740.30px;top:375px;font-size:8.639px;line-height:12px;color:#333;font-weight:700;transform:scaleX(0.9434);transform-origin:0 0;">--</div>
<div class="a" style="left:784.80px;top:375px;font-size:8.802px;line-height:12px;color:#333;transform:scaleX(0.9259);transform-origin:0 0;">0.00%</div>
<div class="a" style="left:800px;top:375.82px;width:77px;text-align:right;font-size:8.15px;line-height:12px;color:#333">0</div>
<div class="a" style="left:229.30px;top:427px;font-size:8.777px;line-height:12px;color:#3a3a3a;font-weight:700;transform:scaleX(0.9434);transform-origin:0 0;">Total - all enabled ads</div>
<svg class="a" style="left:317.50px;top:428.60px" width="8.5" height="7.5" viewBox="0 0 8.5 7.5"><rect x="0.5" y="0.5" width="7.4" height="6.6" fill="#fbfbfb" stroke="#bdbdbd" stroke-width="0.7"/><text x="4.2" y="6" font-family="Liberation Sans" font-size="6.6" text-anchor="middle" fill="#555">?</text></svg>
<div class="a" style="left:800px;top:427.63px;width:77px;text-align:right;font-size:8px;line-height:12px;color:#333;font-weight:bold">0</div>
<div class="a" style="left:229.30px;top:446px;font-size:8.777px;line-height:12px;color:#3a3a3a;font-weight:700;transform:scaleX(0.9434);transform-origin:0 0;">Total - Search</div>
<svg class="a" style="left:284.50px;top:447.70px" width="8.5" height="7.5" viewBox="0 0 8.5 7.5"><rect x="0.5" y="0.5" width="7.4" height="6.6" fill="#fbfbfb" stroke="#bdbdbd" stroke-width="0.7"/><text x="4.2" y="6" font-family="Liberation Sans" font-size="6.6" text-anchor="middle" fill="#555">?</text></svg>
<div class="a" style="left:800px;top:446.73px;width:77px;text-align:right;font-size:8px;line-height:12px;color:#333;font-weight:bold">0</div>
<div class="a" style="left:229.30px;top:465px;font-size:8.777px;line-height:12px;color:#3a3a3a;font-weight:700;transform:scaleX(0.9434);transform-origin:0 0;">Total - Display Network</div>
<svg class="a" style="left:322.50px;top:467.20px" width="8.5" height="7.5" viewBox="0 0 8.5 7.5"><rect x="0.5" y="0.5" width="7.4" height="6.6" fill="#fbfbfb" stroke="#bdbdbd" stroke-width="0.7"/><text x="4.2" y="6" font-family="Liberation Sans" font-size="6.6" text-anchor="middle" fill="#555">?</text></svg>
<div class="a" style="left:800px;top:466.23px;width:77px;text-align:right;font-size:8px;line-height:12px;color:#333;font-weight:bold">0</div>
<div class="a" style="left:228.30px;top:485px;font-size:8.777px;line-height:12px;color:#3a3a3a;font-weight:700;transform:scaleX(0.9434);transform-origin:0 0;">Total - all account</div>
<svg class="a" style="left:300.90px;top:486.70px" width="8.5" height="7.5" viewBox="0 0 8.5 7.5"><rect x="0.5" y="0.5" width="7.4" height="6.6" fill="#fbfbfb" stroke="#bdbdbd" stroke-width="0.7"/><text x="4.2" y="6" font-family="Liberation Sans" font-size="6.6" text-anchor="middle" fill="#555">?</text></svg>
<div class="a" style="left:800px;top:485.73px;width:77px;text-align:right;font-size:8px;line-height:12px;color:#333;font-weight:bold">0</div>
<div class="a" style="left:772.80px;top:506px;font-size:8.186px;line-height:12px;color:#444;transform:scaleX(0.9259);transform-origin:0 0;">Show rows:</div>
<div class="a" style="left:814px;top:504px;width:28px;height:16px;background:#f5f5f5;border:1px solid #dcdcdc;border-radius:1px;"></div>
<div class="a" style="left:817.80px;top:505px;font-size:8.640px;line-height:12px;color:#333;transform:scaleX(0.9259);transform-origin:0 0;">10</div>
<svg class="a" style="left:833px;top:510px" width="8" height="5"><path d="M0.50 0.80 H5.50 L3.00 3.40 Z" fill="#444"/></svg>
<div class="a" style="left:844.20px;top:506px;font-size:8.262px;line-height:12px;color:#444;letter-spacing:0.130px;transform:scaleX(0.9259);transform-origin:0 0;">1 - 3 of 3</div>
<div class="a" style="left:171.90px;top:550px;font-size:7.344px;line-height:12px;color:#bdbdbd;letter-spacing:0.432px;transform:scaleX(0.9259);transform-origin:0 0;">Reporting is not real-time. Clicks and impressions received in the last three hours may not be included here.</div>
<div class="a" style="left:171.9px;top:558.74px;font-size:6.8px;line-height:12px;color:#bdbdbd;letter-spacing:0.43px">There is an 18+ hour delay <span style="color:#2a5cd0;letter-spacing:0.37px">for some metrics</span>. Time zone for all dates and times: (GMT-08:00) Pacific Time. <span style="color:#3266cc;font-weight:bold;letter-spacing:0.25px">Learn more</span></div>
<div class="a" style="left:171.10px;top:577px;font-size:9.850px;line-height:12px;color:#222;transform:scaleX(0.9259);transform-origin:0 0;">&copy; 2013 Google</div>
<div class="a" style="left:239.80px;top:577px;font-size:9.828px;line-height:12px;color:#555;transform:scaleX(0.9259);transform-origin:0 0;">|</div>
<div class="a" style="left:249.10px;top:577px;font-size:9.731px;line-height:12px;color:#3266cc;transform:scaleX(0.9259);transform-origin:0 0;">AdWords Home</div>
<div class="a" style="left:319.00px;top:577px;font-size:9.828px;line-height:12px;color:#555;transform:scaleX(0.9259);transform-origin:0 0;">|</div>
<div class="a" style="left:327.70px;top:577px;font-size:10.012px;line-height:12px;color:#3266cc;transform:scaleX(0.9259);transform-origin:0 0;">Editorial Guidelines</div>
<div class="a" style="left:414.20px;top:577px;font-size:9.828px;line-height:12px;color:#555;transform:scaleX(0.9259);transform-origin:0 0;">|</div>
<div class="a" style="left:422.80px;top:577px;font-size:9.806px;line-height:12px;color:#3266cc;letter-spacing:0.108px;transform:scaleX(0.9259);transform-origin:0 0;">Privacy Policy</div>
<div class="a" style="left:0px;top:736px;width:1px;height:1px;background:#000;"></div>
</div></body></html>
